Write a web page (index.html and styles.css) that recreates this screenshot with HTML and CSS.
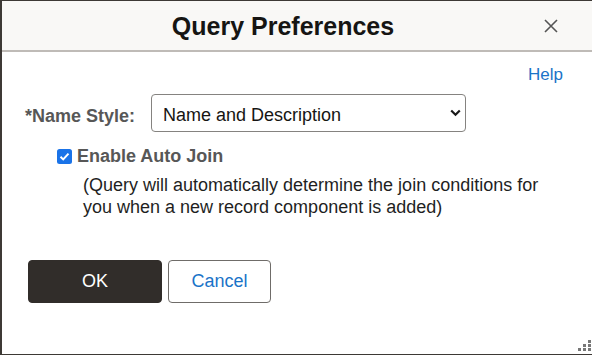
FILE: index.html
```html
<!doctype html>
<html lang="en">
<head>
<meta charset="utf-8">
<title>Query Preferences</title>
<link rel="stylesheet" href="styles.css">
</head>
<body>
<div class="dialog">
  <div class="dlg-head">
    <h1 class="dlg-title">Query Preferences</h1>
    <button class="dlg-close" aria-label="Close">
      <svg width="14" height="14" viewBox="0 0 14 14"><path d="M1 1L13 13M13 1L1 13" stroke="#555" stroke-width="1.6" fill="none"/></svg>
    </button>
  </div>
  <div class="dlg-body">
    <div class="help-row"><a href="#" class="help">Help</a></div>
    <div class="field-row">
      <label class="field-label" for="namestyle">*Name Style:</label>
      <div class="select-wrap">
        <select id="namestyle" class="select">
          <option>Name and Description</option>
        </select>
        <svg class="chev" width="11" height="8" viewBox="0 0 11 8"><path d="M1.2 1.5L5.5 5.8L9.8 1.5" stroke="#1a1a1a" stroke-width="2.2" fill="none"/></svg>
      </div>
    </div>
    <div class="check-row">
      <span class="check">
        <svg width="15" height="15" viewBox="0 0 15 15"><rect x="0" y="0" width="15" height="15" rx="2.5" fill="#1a73e8"/><path d="M3.5 7.8L6.2 10.4L11.5 4.6" stroke="#fff" stroke-width="2" fill="none"/></svg>
      </span>
      <span class="check-label">Enable Auto Join</span>
    </div>
    <p class="note">(Query will automatically determine the join conditions for you when a new record component is added)</p>
    <div class="buttons">
      <button class="btn btn-ok">OK</button>
      <button class="btn btn-cancel">Cancel</button>
    </div>
  </div>
  <span class="grip">
    <svg width="16" height="16" viewBox="0 0 16 16" fill="#777">
      <rect x="12" y="3" width="3" height="3"/>
      <rect x="7" y="7" width="3" height="3"/><rect x="12" y="7" width="3" height="3"/>
      <rect x="2" y="11" width="3" height="3"/><rect x="7" y="11" width="3" height="3"/><rect x="12" y="11" width="3" height="3"/>
    </svg>
  </span>
</div>
</body>
</html>
```
FILE: styles.css
```css
* { box-sizing: border-box; }

body {
	margin: 0;
	background: #fff;
	font-family: "Liberation Sans", Arial, sans-serif;
}

.dialog {
	position: relative;
	width: 592px;
	height: 355px;
	border: 1px solid #3d3935;
	border-left-width: 2px;
	border-right: none;
	background: #fff;
}

.dlg-head {
	display: flex;
	align-items: center;
	height: 51px;
	background: #f9f8f6;
	border-bottom: 2px solid #bfbbb7;
	padding: 1px 34px 0 0;
}

.dlg-title {
	flex: 1;
	margin: 0;
	text-align: center;
	font-size: 25px;
	font-weight: bold;
	color: #161513;
	padding-left: 20px;
}

.dlg-close {
	border: none;
	background: none;
	padding: 0;
	width: 14px;
	height: 14px;
	display: flex;
}

.dlg-body {
	padding: 12px 29px 0 23px;
}

.help-row {
	display: flex;
	justify-content: flex-end;
}

.help {
	color: #1a73c8;
	text-decoration: none;
	font-size: 17px;
	padding-top: 1px;
}

.field-row {
	display: flex;
	align-items: center;
	margin-top: 9px;
}

.field-label {
	font-size: 18px;
	font-weight: bold;
	color: #575757;
	width: 126px;
	padding-top: 6px;
}

.select-wrap {
	position: relative;
}

.select {
	appearance: none;
	width: 315px;
	height: 38px;
	border: 1px solid #858380;
	border-radius: 4px;
	background: #fff;
	font-family: inherit;
	font-size: 18px;
	color: #161513;
	padding: 3px 30px 0 11px;
}

.chev {
	position: absolute;
	right: 5px;
	top: 15px;
}

.check-row {
	display: flex;
	align-items: center;
	margin: 14px 0 0 32px;
}

.check {
	display: flex;
	margin-right: 5px;
}

.check-label {
	font-size: 18px;
	font-weight: bold;
	color: #575757;
}

.note {
	margin: 7px 0 0 58px;
	font-size: 18px;
	line-height: 22px;
	color: #1f1f1f;
}

.buttons {
	display: flex;
	gap: 6px;
	margin-top: 42px;
	margin-left: 3px;
}

.btn {
	height: 43px;
	border-radius: 4px;
	font-family: inherit;
	font-size: 18px;
}

.btn-ok {
	width: 134px;
	background: #312d2a;
	border: 1px solid #312d2a;
	color: #fff;
}

.btn-cancel {
	width: 103px;
	background: #fff;
	border: 1px solid #6f6c69;
	color: #1a73c8;
}

.grip {
	position: absolute;
	right: 0;
	bottom: 1px;
	display: flex;
}
```
